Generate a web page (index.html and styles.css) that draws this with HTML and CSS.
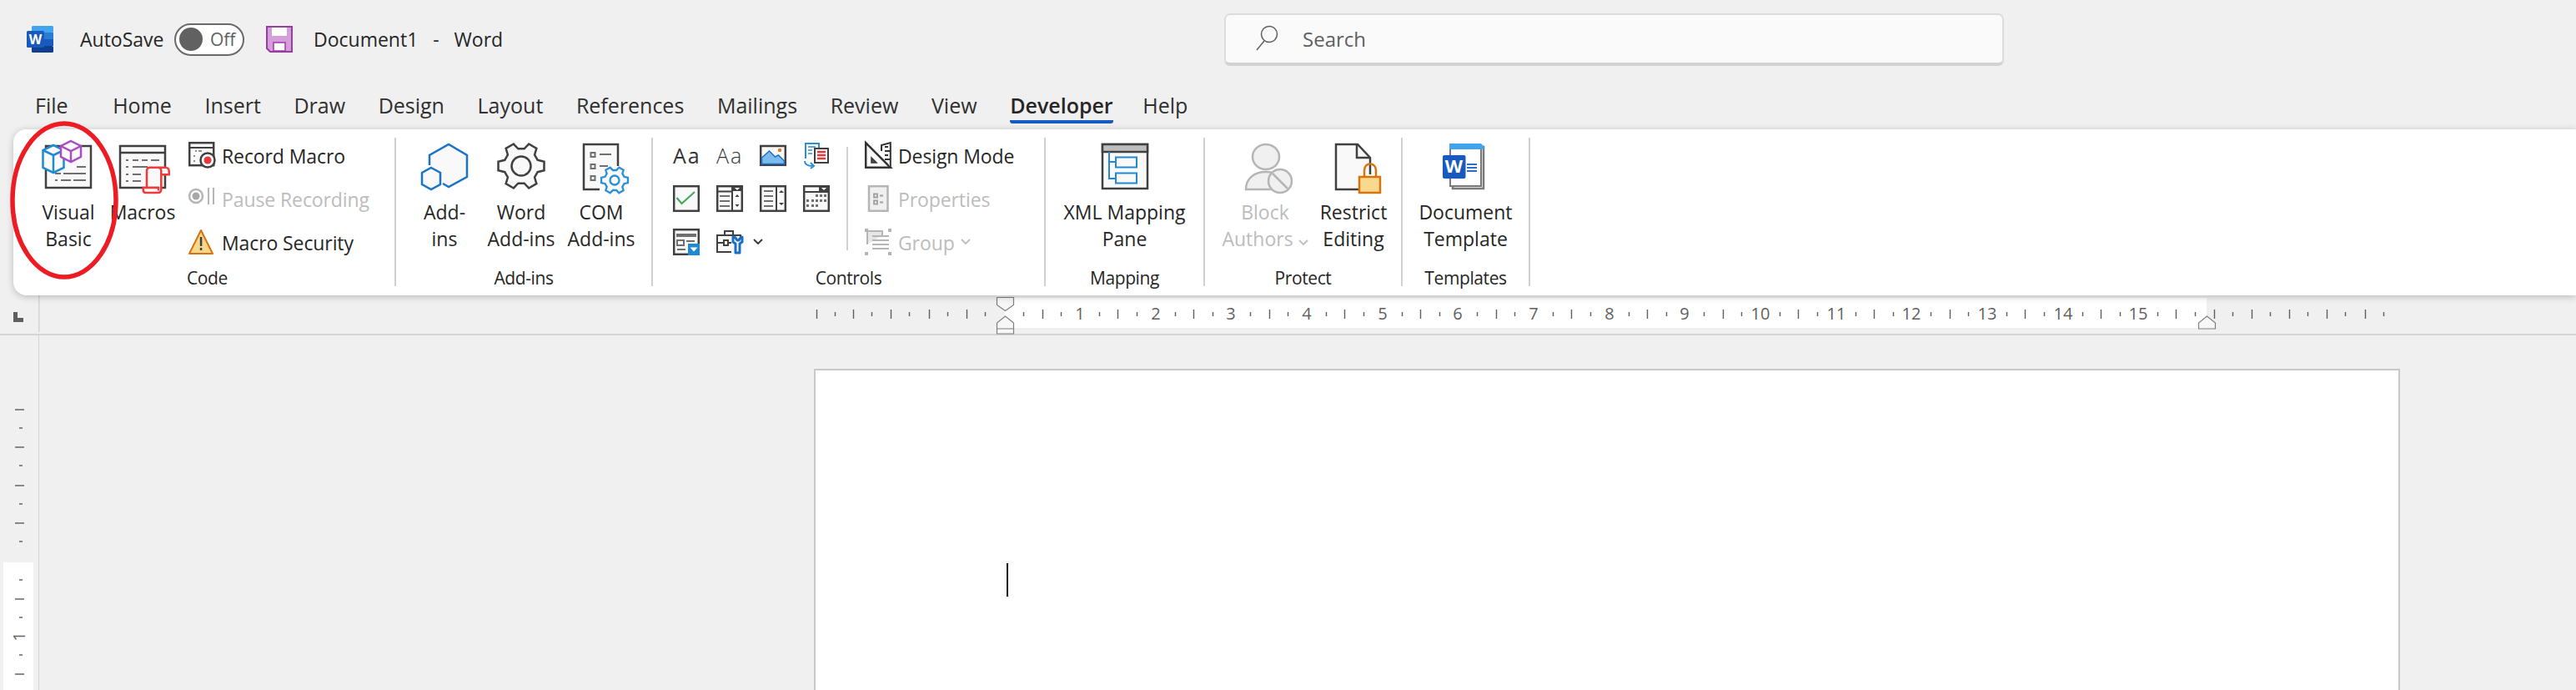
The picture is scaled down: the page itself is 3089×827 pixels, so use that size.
FILE: index.html
```html
<!DOCTYPE html>
<html lang="en">
<head>
  <meta charset="UTF-8" />
  <title>Document1 - Word</title>
  <link rel="stylesheet" href="styles.css">
</head>
<body>
  <header class="titlebar">
    <svg class="word-logo" width="32" height="32" viewBox="0 0 32 32">
      <rect x="6" width="26" height="8" rx="1.5" fill="#41a5ee"/>
      <rect x="6" y="8" width="26" height="8" fill="#2b7cd3"/>
      <rect x="6" y="16" width="26" height="8" fill="#185abd"/>
      <rect x="6" y="24" width="26" height="8" rx="1.5" fill="#103f91"/>
      <rect y="6" width="21" height="20" rx="1.5" fill="#185abd"/>
      <text x="10.5" y="22" class="logo-w" font-size="16">W</text>
    </svg>
    <span class="autosave">AutoSave</span>
    <div class="toggle"><span class="knob"></span><span class="toggle-text">Off</span></div>
    <svg class="save" width="32" height="32" viewBox="0 0 32 32">
      <path d="M1 1h30v30H5l-4-4z" fill="#d49ed9" stroke="#9e3aa5" stroke-width="2"/>
      <rect x="7" y="2" width="18" height="10" fill="#fff"/>
      <rect x="9" y="20" width="14" height="10" fill="#fff" stroke="#9e3aa5" stroke-width="1.5"/>
    </svg>
    <span class="doc-title">Document1&nbsp; -&nbsp; Word</span>
    <div class="search">
      <svg width="30" height="32" viewBox="0 0 30 32" fill="none" stroke="#5f5f5f" stroke-width="1.5">
        <circle cx="17" cy="11" r="9.5"/><path d="M11 19 2 30"/>
      </svg>
      <span>Search</span>
    </div>
  </header>

  <nav class="tabs">
    <span class="tab tab-file">File</span>
    <span class="tab">Home</span>
    <span class="tab">Insert</span>
    <span class="tab">Draw</span>
    <span class="tab">Design</span>
    <span class="tab">Layout</span>
    <span class="tab">References</span>
    <span class="tab">Mailings</span>
    <span class="tab">Review</span>
    <span class="tab">View</span>
    <span class="tab active">Developer</span>
    <span class="tab">Help</span>
  </nav>

  <section class="ribbon">
    <svg class="circled" width="134" height="194" viewBox="0 0 134 194">
      <ellipse cx="66" cy="96" rx="62" ry="92" fill="none" stroke="#ed1c24" stroke-width="5.5"/>
    </svg>

    <div class="group group-code">
      <div class="group-body">
        <div class="big w90">
          <svg class="big-icon" viewBox="0 0 64 64">
            <rect x="5" y="7" width="54" height="50" fill="#f9f9f9" stroke="#404040" stroke-width="2.5"/>
            <path d="M42 32h11M16 40h7M26 40h27M16 48h3M23 48h12M38 48h15" stroke="#6f6f6f" stroke-width="2"/>
            <path d="M14 6l12.500 6v21L14 39 1.500 33V12z" fill="#fafafa" stroke="#1f8ad0" stroke-width="2.5"/>
            <path d="M1.500 12 14 18l12.500-6M14 18v21" fill="none" stroke="#1f8ad0" stroke-width="2.5"/>
            <path d="M35 1l12 6v13l-12 6-12-6V7z" fill="#fafafa" stroke="#a94bc2" stroke-width="2.5"/>
            <path d="M23 7l12 6 12-6M35 13v13" fill="none" stroke="#a94bc2" stroke-width="2.5"/>
          </svg>
          <span>Visual<br>Basic</span>
        </div>
        <div class="big w88">
          <svg class="big-icon" viewBox="0 0 64 64">
            <rect x="5" y="7" width="54" height="50" fill="#f9f9f9" stroke="#404040" stroke-width="2.5"/>
            <path d="M5 15h54" stroke="#404040" stroke-width="2.5"/>
            <path d="M12 24h3M20 24h7M31 24h7M42 24h10M12 32h3M20 32h18M12 41h3M20 41h10M12 49h3M20 49h10" stroke="#6f6f6f" stroke-width="2"/>
            <path d="M37 57V37c0-3 2-4.300 4-4.300h18c3 0 4.700 2 4.700 4.300v4.300h-9.400V37c0-2.500-1.500-4.300-4-4.300M54.300 41v18c0 2.500-1.500 4-4 4H36c-2 0-3.300-1.500-3.300-3.500V57H51v3.500" fill="#f9f9f9" stroke="#ee3a3a" stroke-width="2.5"/>
          </svg>
          <span>Macros</span>
        </div>
        <div class="small-stack">
          <div class="small-row">
            <svg class="small-icon" viewBox="0 0 32 32">
              <rect x="1.200" y="1.200" width="29" height="27" fill="#f9f9f9" stroke="#404040" stroke-width="2.5"/>
              <path d="M1 7h29" stroke="#404040" stroke-width="2"/>
              <path d="M8 11h2M12 11h4M6 17h2M6 23h2" stroke="#6f6f6f" stroke-width="1.5"/>
              <circle cx="23" cy="22" r="8.500" fill="#fff" stroke="#404040" stroke-width="2.5"/>
              <circle cx="23" cy="22" r="4.500" fill="#e8383a"/>
            </svg>
            <span>Record Macro</span>
          </div>
          <div class="small-row disabled">
            <svg class="small-icon" viewBox="0 0 32 32">
              <circle cx="9" cy="13" r="8" fill="#fff" stroke="#b5b5b5" stroke-width="2.5"/>
              <circle cx="9" cy="13" r="4.500" fill="#a8a8a8"/>
              <path d="M24 3v20M30 3v20" stroke="#b5b5b5" stroke-width="2"/>
            </svg>
            <span>Pause Recording</span>
          </div>
          <div class="small-row">
            <svg class="small-icon" viewBox="0 0 32 32">
              <path d="M15 2 29 30H1z" fill="#f8d88c" stroke="#d9730d" stroke-width="2" stroke-linejoin="round"/>
              <rect x="13.800" y="10" width="2.500" height="11" fill="#404040"/>
              <rect x="13.800" y="23" width="2.500" height="3" fill="#404040"/>
            </svg>
            <span>Macro Security</span>
          </div>
        </div>
      </div>
      <div class="group-label">Code</div>
    </div>

    <div class="group group-addins">
      <div class="group-body">
        <div class="big w84">
          <svg class="big-icon" viewBox="0 0 64 64">
            <path d="M30 52l7 4 22-12V18L37 5 14 18v12" fill="#f9f9f9" stroke="#1a73c4" stroke-width="2.5"/>
            <path d="M16 33l11 6v14l-11 6-11-6V39z" fill="#f9f9f9" stroke="#1a73c4" stroke-width="2.5"/>
          </svg>
          <span>Add-<br>ins</span>
        </div>
        <div class="big w100">
          <svg class="big-icon" viewBox="0 0 64 64">
            <g transform="translate(32 31)">
              <path d="M19.730-7.180 27.490-5.340 27.490 5.340 19.730 7.180 16.090 13.500 18.370 21.130 9.120 26.470 3.650 20.680-3.650 20.680-9.120 26.470-18.370 21.130-16.090 13.500-19.730 7.180-27.490 5.340-27.490-5.340-19.730-7.180-16.090-13.500-18.370-21.130-9.120-26.470-3.650-20.680 3.650-20.680 9.120-26.470 18.370-21.130 16.090-13.500z" fill="#f9f9f9" stroke="#404040" stroke-width="2.5"/>
              <circle r="11.500" fill="#f9f9f9" stroke="#404040" stroke-width="2.5"/>
            </g>
          </svg>
          <span>Word<br>Add-ins</span>
        </div>
        <div class="big w92">
          <svg class="big-icon" viewBox="0 0 64 64">
            <path d="M30 59H11V5h41v26" fill="#f9f9f9" stroke="#404040" stroke-width="2.5"/>
            <path d="M19.500 15h5v5h-5zM19.500 29h5v5h-5zM19.500 43h5v5h-5z" fill="none" stroke="#6f6f6f" stroke-width="2"/>
            <path d="M30 17h14M30 31h10" stroke="#6f6f6f" stroke-width="2"/>
            <g transform="translate(48 48) scale(.58)">
              <path d="M19.730-7.180 27.490-5.340 27.490 5.340 19.730 7.180 16.090 13.500 18.370 21.130 9.120 26.470 3.650 20.680-3.650 20.680-9.120 26.470-18.370 21.130-16.090 13.500-19.730 7.180-27.490 5.340-27.490-5.340-19.730-7.180-16.090-13.500-18.370-21.130-9.120-26.470-3.650-20.680 3.650-20.680 9.120-26.470 18.370-21.130 16.090-13.500z" fill="#f9f9f9" stroke="#2a8fd6" stroke-width="4"/>
              <circle r="9.500" fill="#f9f9f9" stroke="#2a8fd6" stroke-width="4"/>
            </g>
          </svg>
          <span>COM<br>Add-ins</span>
        </div>
      </div>
      <div class="group-label">Add-ins</div>
    </div>

    <div class="group group-controls">
      <div class="group-body">
        <div class="ctl-grid">
          <span class="aa">Aa</span>
          <span class="aa aa-plain">Aa</span>
          <svg class="small-icon" viewBox="0 0 32 32">
            <rect x="1.200" y="5" width="29.600" height="22.800" fill="#f9f9f9" stroke="#404040" stroke-width="2.5"/>
            <path d="M2.500 26.500V19l9-8 7 7 4-2 7 7v3.500z" fill="#7dbbee" stroke="#1a73c4" stroke-width="1.5"/>
            <circle cx="24" cy="10" r="2.200" fill="#e8791e"/>
          </svg>
          <svg class="small-icon" viewBox="0 0 32 32">
            <path d="M3 20V2h16v6" fill="#fff" stroke="#2a8fd6" stroke-width="2"/>
            <path d="M6 6h9M6 10h5M6 14h5" stroke="#2a8fd6" stroke-width="1.5"/>
            <rect x="14" y="8" width="16" height="17" fill="#fff" stroke="#404040" stroke-width="2"/>
            <path d="M17 12h10M17 16h10M17 20h10" stroke="#e8383a" stroke-width="2.5"/>
            <path d="M2 23c0 5 4 6 10 6M9 25l4 4-4 3" fill="none" stroke="#2a8fd6" stroke-width="2"/>
          </svg>

          <svg class="small-icon" viewBox="0 0 32 32">
            <rect x="1.200" y="1.200" width="29.600" height="29.600" fill="#f9f9f9" stroke="#404040" stroke-width="2.5"/>
            <path d="M4.500 15l6 7L26 8" fill="none" stroke="#3fa65a" stroke-width="2"/>
          </svg>
          <svg class="small-icon" viewBox="0 0 32 32">
            <rect x="1.200" y="1.200" width="29.600" height="29.600" fill="#f9f9f9" stroke="#404040" stroke-width="2.5"/>
            <path d="M1 7.500h18M19 1v30" stroke="#404040" stroke-width="2"/>
            <path d="M4 13h12M4 19h12M4 25h12" stroke="#6f6f6f" stroke-width="2"/>
            <path d="M19 1h12v6H19z" fill="#404040"/>
            <path d="M22 3h6l-3 3z" fill="#fff"/>
            <path d="M22.500 14h5l-2.500-3zM22.500 23h5l-2.500 3z" fill="#404040"/>
          </svg>
          <svg class="small-icon" viewBox="0 0 32 32">
            <rect x="1.200" y="1.200" width="29.600" height="29.600" fill="#f9f9f9" stroke="#404040" stroke-width="2.5"/>
            <path d="M20 1v30" stroke="#404040" stroke-width="2"/>
            <path d="M5 7h11M5 13h11M5 19h11M5 25h11" stroke="#6f6f6f" stroke-width="2"/>
            <path d="M23 9h6l-3-3zM23 21h6l-3 3z" fill="#404040"/>
          </svg>
          <svg class="small-icon" viewBox="0 0 32 32">
            <rect x="1.200" y="1.200" width="29.600" height="29.600" fill="#f9f9f9" stroke="#404040" stroke-width="2.5"/>
            <path d="M1 8h30" stroke="#404040" stroke-width="2"/>
            <path d="M19 1h12v7H19z" fill="#404040"/>
            <path d="M22 3h6l-3 3z" fill="#fff"/>
            <path d="M15 11h3v3h-3zM20 11h3v3h-3zM25 11h3v3h-3zM4 17h3v3H4zM10 17h3v3h-3zM15 17h3v3h-3zM20 17h3v3h-3zM25 17h3v3h-3zM4 23h3v3H4zM10 23h3v3h-3zM15 23h3v3h-3z" fill="#6f6f6f"/>
          </svg>

          <svg class="small-icon" viewBox="0 0 32 32">
            <rect x="1.200" y="1.200" width="29.600" height="29.600" fill="#f9f9f9" stroke="#404040" stroke-width="2.5"/>
            <rect x="4" y="6" width="24" height="4" fill="#6f6f6f"/>
            <rect x="5" y="14" width="8" height="6" fill="none" stroke="#6f6f6f" stroke-width="2"/>
            <path d="M16 15h10M5 25h10" stroke="#6f6f6f" stroke-width="2"/>
            <rect x="18" y="18" width="14" height="14" fill="#1f8ad0"/>
            <path d="M20.500 22.500h9l-4.500 5z" fill="#fff"/>
          </svg>
          <div class="tools">
            <svg class="small-icon" viewBox="0 0 32 32">
              <path d="M18 28H1V8h28v6M10 8V3h10v5M1 17h8M14 17h4" fill="#f9f9f9" stroke="#404040" stroke-width="2"/>
              <rect x="9" y="14" width="5" height="6" fill="none" stroke="#404040" stroke-width="2"/>
              <path d="M20 10v6l3 2v11h5V18l3-2v-6l-3 2-1 2h-2l-2-3z" fill="#f9f9f9" stroke="#1a6fc2" stroke-width="3" stroke-linejoin="round"/>
            </svg>
            <svg class="chev" width="12" height="8" viewBox="0 0 12 8"><path d="M1 1l5 5 5-5" fill="none" stroke="#333" stroke-width="1.8"/></svg>
          </div>
        </div>
        <div class="ctl-sep"></div>
        <div class="small-stack">
          <div class="small-row">
            <svg class="small-icon" viewBox="0 0 32 32">
              <path d="M1.200 1.200 30.800 30.800H1.200z" fill="#f9f9f9" stroke="#333" stroke-width="2.5"/>
              <path d="M8 19l6 6H8z" fill="#555" stroke="#333" stroke-width="1.5"/>
              <path d="M20 11V4l10.800-3v29.800M24 6h4M24 11h6M24 16h4M24 21h6" fill="#f9f9f9" stroke="#333" stroke-width="2"/>
            </svg>
            <span>Design Mode</span>
          </div>
          <div class="small-row disabled">
            <svg class="small-icon" viewBox="0 0 32 32">
              <rect x="5" y="1.200" width="22.500" height="29.600" fill="#f0f0f0" stroke="#b5b5b5" stroke-width="2.5"/>
              <path d="M11 10.500h4v4h-4zM11 18.500h4v4h-4z" fill="none" stroke="#a0a0a0" stroke-width="1.8"/>
              <path d="M18 12.500h4M18 20.500h4" stroke="#a0a0a0" stroke-width="2"/>
            </svg>
            <span>Properties</span>
          </div>
          <div class="small-row disabled">
            <svg class="small-icon" viewBox="0 0 32 32">
              <path d="M0 0h4v4H0zM28 0h4v4h-4zM0 28h4v4H0zM28 28h4v4h-4z" fill="#b5b5b5"/>
              <path d="M3 19V3h18v5" fill="#e6e6e6" stroke="#b5b5b5" stroke-width="2"/>
              <path d="M9 9h20M9 14h20M9 19h20M9 24h20" stroke="#b5b5b5" stroke-width="2"/>
            </svg>
            <span>Group</span>
            <svg class="chev chev-off" width="12" height="8" viewBox="0 0 12 8"><path d="M1 1l5 5 5-5" fill="none" stroke="#bdbdbd" stroke-width="1.8"/></svg>
          </div>
        </div>
      </div>
      <div class="group-label">Controls</div>
    </div>

    <div class="group group-mapping">
      <div class="group-body group-center">
        <div class="big w190">
          <svg class="big-icon" viewBox="0 0 64 64">
            <rect x="5" y="5" width="54" height="53" fill="#f9f9f9" stroke="#404040" stroke-width="2.5"/>
            <rect x="5" y="5" width="54" height="9" fill="#bdbdbd" stroke="#404040" stroke-width="2.5"/>
            <path d="M13 14v32h8M13 26h8" fill="none" stroke="#2189d4" stroke-width="2"/>
            <rect x="21" y="20.500" width="25" height="12" fill="none" stroke="#2189d4" stroke-width="2"/>
            <rect x="21" y="39.500" width="25" height="12" fill="none" stroke="#2189d4" stroke-width="2"/>
          </svg>
          <span>XML Mapping<br>Pane</span>
        </div>
      </div>
      <div class="group-label">Mapping</div>
    </div>

    <div class="group group-protect">
      <div class="group-body">
        <div class="big w112 disabled">
          <svg class="big-icon" viewBox="0 0 64 64">
            <path d="M9 59c0-13 10-21 24-21s24 8 24 21z" fill="#f0f0f0" stroke="#b5b5b5" stroke-width="2.5"/>
            <ellipse cx="33" cy="20" rx="16" ry="15" fill="#f0f0f0" stroke="#b5b5b5" stroke-width="2.5"/>
            <circle cx="50" cy="49" r="14" fill="#f0f0f0" stroke="#b5b5b5" stroke-width="2.5"/>
            <path d="M41 40l18 18" stroke="#b5b5b5" stroke-width="2.5"/>
          </svg>
          <span>Block<br>Authors <svg class="chev" width="12" height="8" viewBox="0 0 12 8"><path d="M1 1l5 5 5-5" fill="none" stroke="#bdbdbd" stroke-width="1.8"/></svg></span>
        </div>
        <div class="big w100">
          <svg class="big-icon" viewBox="0 0 64 64">
            <path d="M40 59H11V5h26l15 16v20" fill="#f9f9f9" stroke="#404040" stroke-width="2.5"/>
            <path d="M36 5v16h16" fill="none" stroke="#404040" stroke-width="2.5"/>
            <path d="M45 44V36c0-10 14-10 14 0v8" fill="none" stroke="#d9730d" stroke-width="2.5"/>
            <rect x="39" y="44" width="25" height="19" fill="#f8d98e" stroke="#d9730d" stroke-width="2.5"/>
          </svg>
          <span>Restrict<br>Editing</span>
        </div>
      </div>
      <div class="group-label">Protect</div>
    </div>

    <div class="group group-templates">
      <div class="group-body group-center">
        <div class="big w150">
          <svg class="big-icon" viewBox="0 0 64 64">
            <rect x="16" y="8" width="37" height="50" fill="#f9f9f9" stroke="#7a7a7a" stroke-width="2.5"/>
            <rect x="13" y="6" width="37" height="49" fill="#fff" stroke="#7a7a7a" stroke-width="2"/>
            <path d="M12 4h38l3 3v4H12z" fill="#41a5ee"/>
            <path d="M33 29h12M33 33h12M33 37h12" stroke="#2b6cc4" stroke-width="2"/>
            <rect x="4" y="18" width="27.500" height="28" rx="2" fill="#185abd"/>
            <text x="17.500" y="39" class="logo-w" font-size="22">W</text>
          </svg>
          <span>Document<br>Template</span>
        </div>
      </div>
      <div class="group-label">Templates</div>
    </div>
  </section>

  <svg class="ruler" width="3089" height="48" viewBox="0 0 3089 48">
    <rect x="1205" y="3" width="1441" height="36" fill="#fff"/>
    <rect x="46" width="1.5" height="44" fill="#d4d4d4"/>
    <rect y="46" width="3089" height="2" fill="#d4d4d4"/>
    <path d="M16 20h5v7h7v5H16z" fill="#5f5f5f"/>
    <path class="tick" d="M979 17v11M1023 17v11M1068 17v11M1114 17v11M1159 17v11M1250 17v11M1340 17v11M1431 17v11M1522 17v11M1612 17v11M1703 17v11M1794 17v11M1884 17v11M1975 17v11M2066 17v11M2156 17v11M2247 17v11M2338 17v11M2428 17v11M2519 17v11M2609 17v11M2655 17v11M2700 17v11M2745 17v11M2790 17v11M2836 17v11"/>
    <path class="tick" d="M1001 20v5M1045 20v5M1090 20v5M1136 20v5M1181 20v5M1227 20v5M1272 20v5M1318 20v5M1363 20v5M1409 20v5M1454 20v5M1499 20v5M1544 20v5M1590 20v5M1635 20v5M1681 20v5M1726 20v5M1771 20v5M1816 20v5M1862 20v5M1907 20v5M1953 20v5M1998 20v5M2043 20v5M2088 20v5M2134 20v5M2179 20v5M2225 20v5M2270 20v5M2315 20v5M2360 20v5M2406 20v5M2451 20v5M2497 20v5M2542 20v5M2587 20v5M2632 20v5M2677 20v5M2722 20v5M2767 20v5M2812 20v5M2858 20v5"/>
    <g class="ruler-num">
      <text x="1295" y="29">1</text><text x="1386" y="29">2</text><text x="1476" y="29">3</text>
      <text x="1567" y="29">4</text><text x="1658" y="29">5</text><text x="1748" y="29">6</text>
      <text x="1839" y="29">7</text><text x="1930" y="29">8</text><text x="2020" y="29">9</text>
      <text x="2111" y="29">10</text><text x="2202" y="29">11</text><text x="2292" y="29">12</text>
      <text x="2383" y="29">13</text><text x="2474" y="29">14</text><text x="2564" y="29">15</text>
    </g>
    <g class="marker">
      <path d="M1195.500 2.500h20v9l-10 7-10-7z"/>
      <path d="M1205.500 25l10 8v13h-20V33zM1195.500 40h20"/>
      <path d="M2646.500 25l10 8v7h-20v-7z"/>
    </g>
  </svg>

  <main class="workspace">
    <svg class="vruler" width="46" height="425" viewBox="0 0 46 425">
      <rect x="4" y="272" width="36" height="153" fill="#fff"/>
      <path class="vtick" d="M18 89h11M18 134h11M18 180h11M18 225h11M18 316h11M18 406h11"/>
      <path class="vtick" d="M23 111h4M23 156h4M23 202h4M23 247h4M23 293h4M23 338h4M23 383h4"/>
      <text class="ruler-num" transform="translate(30 361) rotate(-90)">1</text>
    </svg>
    <div class="page-area">
      <div class="page"><div class="caret"></div></div>
    </div>
  </main>
</body>
</html>
```

FILE: styles.css
```css
* { box-sizing: border-box; }
html, body { margin: 0; height: 827px; overflow: hidden; }
body { font-family: "Open Sans", "Noto Sans", sans-serif; font-size: 23px; color: #262626; background: #f0f0f0; width: 3089px; }
svg { display: block; flex-shrink: 0; }

/* title bar */
.titlebar { height: 94px; display: flex; align-items: center; padding-left: 32px; }
.logo-w { font-family: "Open Sans", sans-serif; font-weight: 700; fill: #fff; text-anchor: middle; }
.word-logo { margin-right: 32px; }
.autosave { width: 113px; }
.toggle { width: 84px; height: 39px; border: 2.5px solid #6a6a6a; border-radius: 20px; background: #fff; display: flex; align-items: center; padding-left: 4px; }
.knob { width: 28px; height: 28px; border-radius: 50%; background: #616161; }
.toggle-text { margin-left: 9px; font-size: 21px; color: #616161; }
.save { margin-left: 26px; margin-right: 25px; }
.doc-title { width: 1092px; word-spacing: 3px; }
.search { width: 935px; height: 63px; padding-left: 35px; display: flex; align-items: center; gap: 27px; font-size: 24px; background: #fafafa; border: 2px solid #dcdcdc; border-bottom: 4px solid #d2d2d2; border-radius: 7px; color: #5f5f5f; }

/* tabs */
.tabs { height: 60px; display: flex; gap: 39.6px; padding: 14px 0 0 42px; font-size: 25px; }
.tab { height: 40px; line-height: 36px; color: #303030; }
.tab-file { margin-right: 14px; }
.tab.active { margin-right: -4px; font-weight: 600; color: #262626; border-bottom: 4px solid #185abd; border-radius: 0 0 3px 3px; }

/* ribbon */
.ribbon { position: relative; z-index: 2; height: 200px; margin-left: 16px; padding: 10px 0 0 8px; display: flex; background: #fff; border-top: 1px solid #e2e2e2; border-radius: 16px 0 0 16px; box-shadow: 0 2px 8px rgba(0, 0, 0, 0.22); }
.circled { position: absolute; left: -5px; top: -11px; z-index: 3; overflow: visible; }
.group { height: 178px; padding-top: 3px; display: flex; flex-direction: column; border-right: 2px solid #d0d0d0; }
.group-code { width: 451px; padding-left: 13px; }
.group-addins { width: 308px; padding-left: 16px; }
.group-controls { width: 471px; padding-left: 24px; }
.group-mapping { width: 191px; }
.group-protect { width: 237px; padding-left: 16px; }
.group-templates { width: 153px; }
.group-body { flex: 1; display: flex; }
.group-center { justify-content: center; }
.group-label { height: 20px; line-height: 20px; text-align: center; font-size: 21px; letter-spacing: -0.4px; }
.group-code .group-label { margin-left: -13px; }
.group-addins .group-label, .group-protect .group-label { margin-left: -16px; }
.group-controls .group-label { margin-left: -24px; }

.big { display: flex; flex-direction: column; align-items: center; text-align: center; line-height: 32px; white-space: nowrap; }
.big-icon { width: 64px; height: 64px; margin-bottom: 6px; overflow: visible; }
.w84 { width: 84px; }
.w88 { width: 88px; }
.w90 { width: 90px; }
.w92 { width: 92px; }
.w100 { width: 100px; }
.w112 { width: 112px; }
.w150 { width: 150px; }
.w190 { width: 190px; }
.disabled { color: #bcbcbc; }

.small-stack { margin-left: 11px; padding-top: 2px; display: flex; flex-direction: column; gap: 20px; }
.small-row { height: 32px; display: flex; align-items: center; gap: 8px; white-space: nowrap; letter-spacing: -0.1px; }
.small-row span { padding-top: 2px; }
.small-icon { width: 32px; height: 32px; overflow: visible; }
.chev { display: inline-block; }
.chev-off { margin-left: -1px; }

.ctl-grid { width: 208px; height: 136px; margin-top: 2px; display: grid; grid-template-columns: repeat(4, 52px); grid-auto-rows: 32px; row-gap: 20px; }
.aa { width: 32px; height: 32px; font-size: 25px; line-height: 32px; letter-spacing: 2px; color: #333; }
.aa-plain { font-weight: 300; }
.tools { display: flex; align-items: center; gap: 12px; grid-column: span 2; }
.ctl-sep { width: 2px; height: 124px; margin: 8px 20px 0 0; background: #d0d0d0; }
.group-controls .small-stack { margin-left: 0; }

/* rulers */
.ruler { position: relative; z-index: 1; }
.tick { fill: none; stroke: #5f5f5f; stroke-width: 1.4; transform: translateX(0.5px); }
.ruler-num { font-size: 20px; fill: #5f5f5f; text-anchor: middle; }
.marker path { fill: #f7f7f7; stroke: #808080; stroke-width: 1.2; }
.workspace { height: 425px; display: flex; }
.vtick { fill: none; stroke: #666; stroke-width: 1.4; }
.page-area { flex: 1; height: 425px; padding: 40px 0 0 929px; border-left: 1.5px solid #d4d4d4; overflow: hidden; }
.page { width: 1902px; height: 500px; padding: 231px 0 0 229px; background: #fff; border: 2px solid #c8c8c8; }
.caret { width: 2px; height: 40px; background: #111; }
```
